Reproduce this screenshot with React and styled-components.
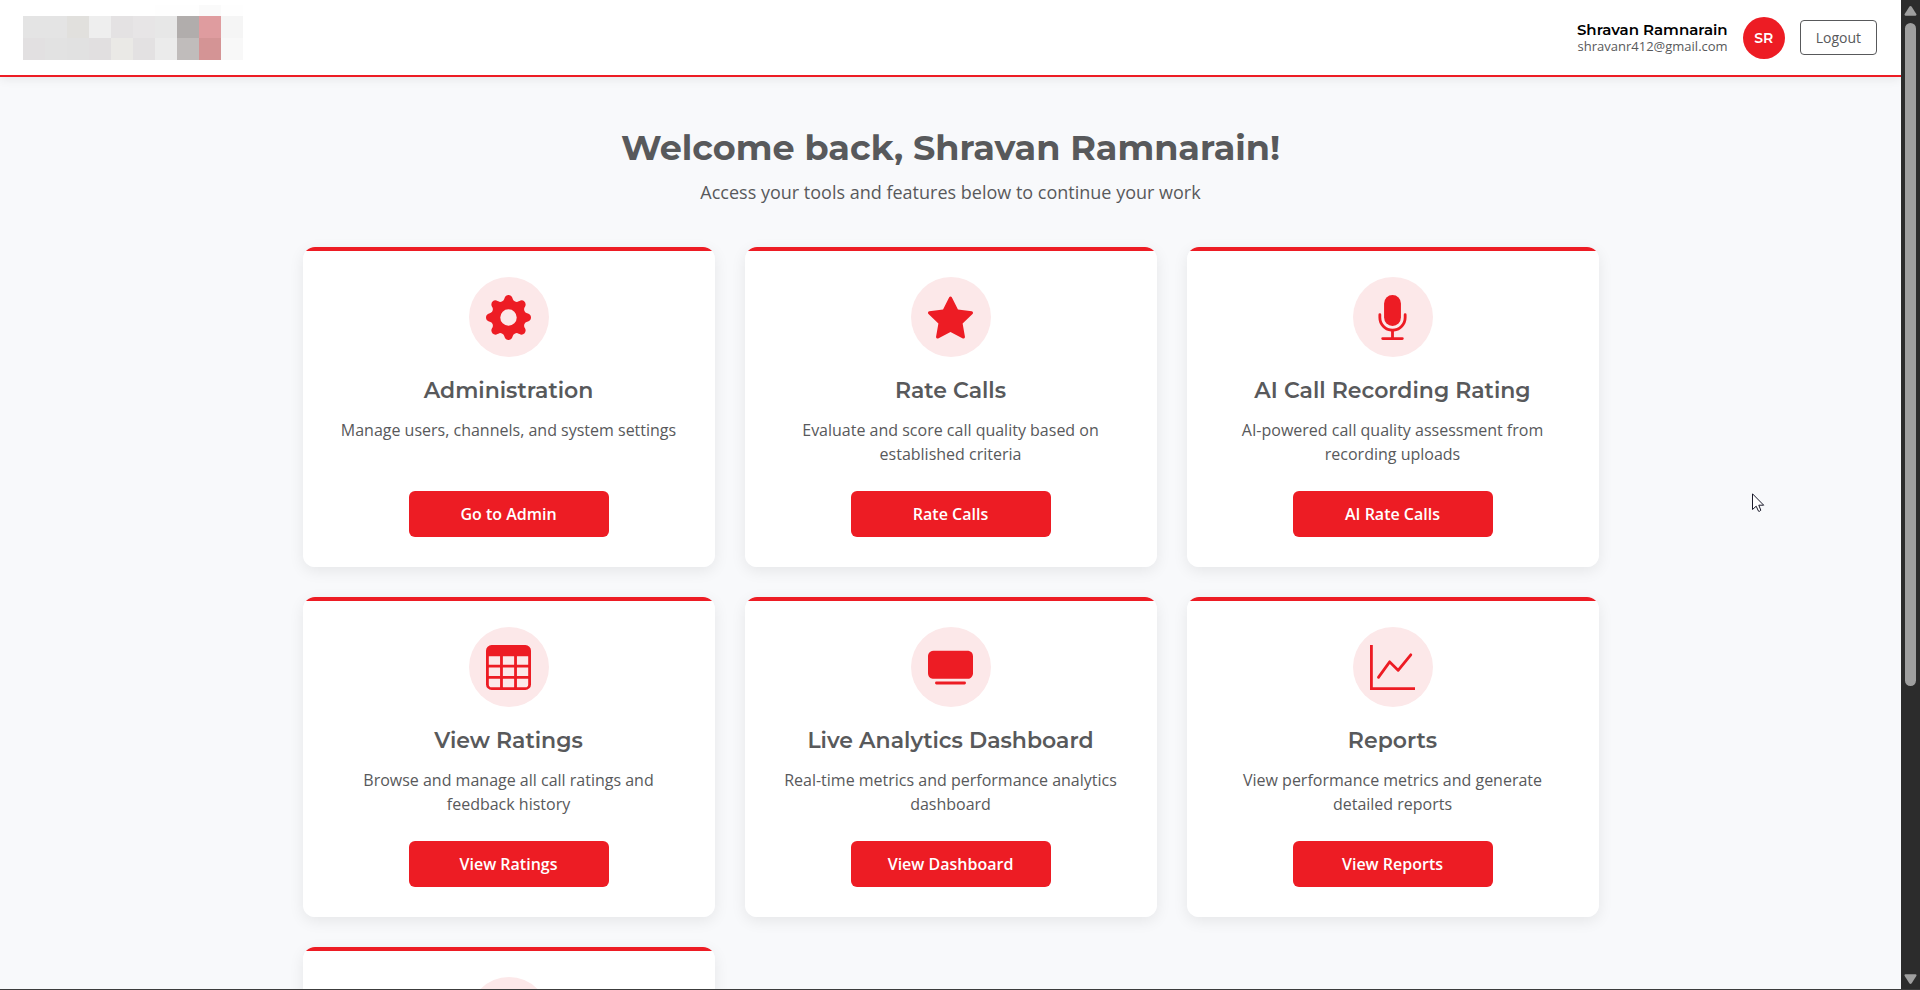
import React from 'react';
import styled, { createGlobalStyle } from 'styled-components';
import { BsGearFill, BsStarFill, BsMicFill, BsTable, BsTvFill, BsGraphUp } from 'react-icons/bs';

const red = '#ed1c24';
const gray = '#58595b';
const heading = `'Montserrat', 'Inter', 'Liberation Sans', sans-serif`;
const copy = `'Open Sans', 'Noto Sans', sans-serif`;

const GlobalStyle = createGlobalStyle`
  *, *::before, *::after { box-sizing: border-box; }
  body { margin: 0; background: #f8f9fb; color: ${gray}; font-family: ${copy}; font-size: 16px; line-height: 24px; }
  h1, h2, p { margin: 0; }
  button { font-family: inherit; cursor: pointer; }
`;

const Shell = styled.div`
  position: relative;
  display: flex;
  height: 100vh;
  overflow: hidden;
  border-bottom: 1px solid #3c3c3c;
`;

const Page = styled.div`
  flex: 1;
  min-width: 0;
  overflow: hidden;
`;

const Header = styled.header`
  display: flex;
  align-items: center;
  justify-content: space-between;
  height: 77px;
  padding: 0 24px 0 23px;
  background: #fff;
  border-bottom: 2px solid ${red};
  box-shadow: 0 2px 10px rgba(0, 0, 0, 0.08);
`;

const Account = styled.div`
  display: flex;
  align-items: center;
  gap: 15px;
`;

const Identity = styled.div`
  text-align: right;
`;

const UserName = styled.div`
  font: 600 15px/16px ${heading};
  color: #000;
`;

const UserEmail = styled.div`
  font-size: 13px;
  line-height: 16px;
`;

const Avatar = styled.div`
  display: grid;
  place-items: center;
  width: 42px;
  height: 42px;
  border-radius: 50%;
  background: ${red};
  color: #fff;
  font: 600 14px/20px ${heading};
`;

const LogoutButton = styled.button`
  height: 35px;
  padding: 0 15px;
  border: 1px solid ${gray};
  border-radius: 4px;
  background: transparent;
  color: ${gray};
  font-size: 14px;
`;

const Main = styled.main`
  max-width: 1320px;
  margin: 0 auto;
  padding: 48px 12px;
`;

const Intro = styled.div`
  text-align: center;
  margin-bottom: 40px;
`;

const Title = styled.h1`
  font: 700 35px/46px ${heading};
  margin-bottom: 6px;
`;

const Subtitle = styled.p`
  font-size: 18px;
  line-height: 30px;
`;

const Grid = styled.div`
  display: grid;
  grid-template-columns: repeat(3, 1fr);
  gap: 30px;
`;

const Card = styled.section`
  position: relative;
  display: flex;
  flex-direction: column;
  align-items: center;
  min-height: 320px;
  padding: 30px;
  overflow: hidden;
  border-radius: 12px;
  background: #fff;
  text-align: center;

  &::before {
    content: '';
    position: absolute;
    inset: 0 0 auto;
    height: 4px;
    background: ${red};
  }
`;

const CardShadow = styled.div`
  border-radius: 12px;
  box-shadow: 0 4px 15px rgba(0, 0, 0, 0.08);
`;

const IconCircle = styled.div`
  display: grid;
  place-items: center;
  width: 80px;
  height: 80px;
  margin-bottom: 20px;
  border-radius: 50%;
  background: #fce8e9;
  color: ${red};
  font-size: 45px;
`;

const CardTitle = styled.h2`
  font: 600 22px/28px ${heading};
  margin-bottom: 13px;
`;

const CardText = styled.p`
  flex: 1;
  margin-bottom: 20px;
`;

const CardButton = styled.button`
  width: 200px;
  height: 46px;
  border: 0;
  border-radius: 6px;
  background: ${red};
  color: #fff;
  font-size: 16px;
  font-weight: 600;
`;

const Scrollbar = styled.div`
  display: flex;
  flex-direction: column;
  align-items: center;
  width: 19px;
  padding: 6px 0 5px;
  background: #2c2c2c;
`;

const Track = styled.div`
  flex: 1;
  margin: 7px 0 4px;
`;

const Thumb = styled.div`
  width: 11px;
  height: 70%;
  border-radius: 6px;
  background: #9f9f9f;
`;

const Pointer = styled.svg`
  position: absolute;
  left: 1752px;
  top: 493px;
`;

const logoRows = [
  ['#e4e4e4', '#e4e4e4', '#e1e0dd', '#eeeeee', '#e4e2e3', '#e7e5e6', '#e7e7e7', '#b1adac', '#df9c9f', '#f5f5f5'],
  ['#e2e0e1', '#e2e2e2', '#e1e1e1', '#e1dfe0', '#eae9e6', '#e3e1e2', '#ebebeb', '#c0bcbb', '#d49495', '#f8f8f8'],
];

function Logo() {
  return (
    <svg width="220" height="66" viewBox="0 0 220 66" shapeRendering="crispEdges" role="img" aria-label="Company logo">
      <rect x="132" width="88" height="11" fill="#fefefe" />
      <rect x="176" width="22" height="11" fill="#fafafa" />
      {logoRows.map((row, r) =>
        row.map((fill, c) => <rect key={`${r}-${c}`} x={c * 22} y={11 + r * 22} width="22" height="22" fill={fill} />)
      )}
    </svg>
  );
}

const tools = [
  { title: 'Administration', text: 'Manage users, channels, and system settings', action: 'Go to Admin', Icon: BsGearFill },
  { title: 'Rate Calls', text: 'Evaluate and score call quality based on established criteria', action: 'Rate Calls', Icon: BsStarFill },
  { title: 'AI Call Recording Rating', text: 'AI-powered call quality assessment from recording uploads', action: 'AI Rate Calls', Icon: BsMicFill },
  { title: 'View Ratings', text: 'Browse and manage all call ratings and feedback history', action: 'View Ratings', Icon: BsTable },
  { title: 'Live Analytics Dashboard', text: 'Real-time metrics and performance analytics dashboard', action: 'View Dashboard', Icon: BsTvFill },
  { title: 'Reports', text: 'View performance metrics and generate detailed reports', action: 'View Reports', Icon: BsGraphUp },
];

function ToolCard({ title, text, action, Icon }) {
  return (
    <CardShadow>
      <Card>
        <IconCircle>{Icon && <Icon aria-hidden="true" />}</IconCircle>
        {title && <CardTitle>{title}</CardTitle>}
        {text && <CardText>{text}</CardText>}
        {action && <CardButton type="button">{action}</CardButton>}
      </Card>
    </CardShadow>
  );
}

export default function App() {
  return (
    <>
      <GlobalStyle />
      <Shell>
        <Page>
          <Header>
            <Logo />
            <Account>
              <Identity>
                <UserName>Shravan Ramnarain</UserName>
                <UserEmail>shravanr412@gmail.com</UserEmail>
              </Identity>
              <Avatar>SR</Avatar>
              <LogoutButton type="button">Logout</LogoutButton>
            </Account>
          </Header>
          <Main>
            <Intro>
              <Title>Welcome back, Shravan Ramnarain!</Title>
              <Subtitle>Access your tools and features below to continue your work</Subtitle>
            </Intro>
            <Grid>
              {tools.map((tool) => (
                <ToolCard key={tool.title} {...tool} />
              ))}
              <ToolCard />
            </Grid>
          </Main>
        </Page>
        <Scrollbar aria-hidden="true">
          <svg width="13" height="10" viewBox="0 0 13 10">
            <path d="M5.3.8Q6.500-.6 7.700.8L12.300 8Q13 9.600 11.500 9.700H1.500Q0 9.600.7 8Z" fill="#9f9f9f" />
          </svg>
          <Track>
            <Thumb />
          </Track>
          <svg width="13" height="10" viewBox="0 0 13 10">
            <path d="M5.3 9.200Q6.500 10.600 7.700 9.200L12.300 2Q13 .4 11.500.3H1.500Q0 .4.7 2Z" fill="#9f9f9f" />
          </svg>
        </Scrollbar>
        <Pointer width="13" height="20" viewBox="0 0 13 20" aria-hidden="true">
          <path d="M.5.8V16.500L4.200 13.200L6.500 18.200Q7.800 18.800 8.800 17.200L6.800 12.200H11.700Z" fill="#fff" stroke="#1a1a2a" />
        </Pointer>
      </Shell>
    </>
  );
}
